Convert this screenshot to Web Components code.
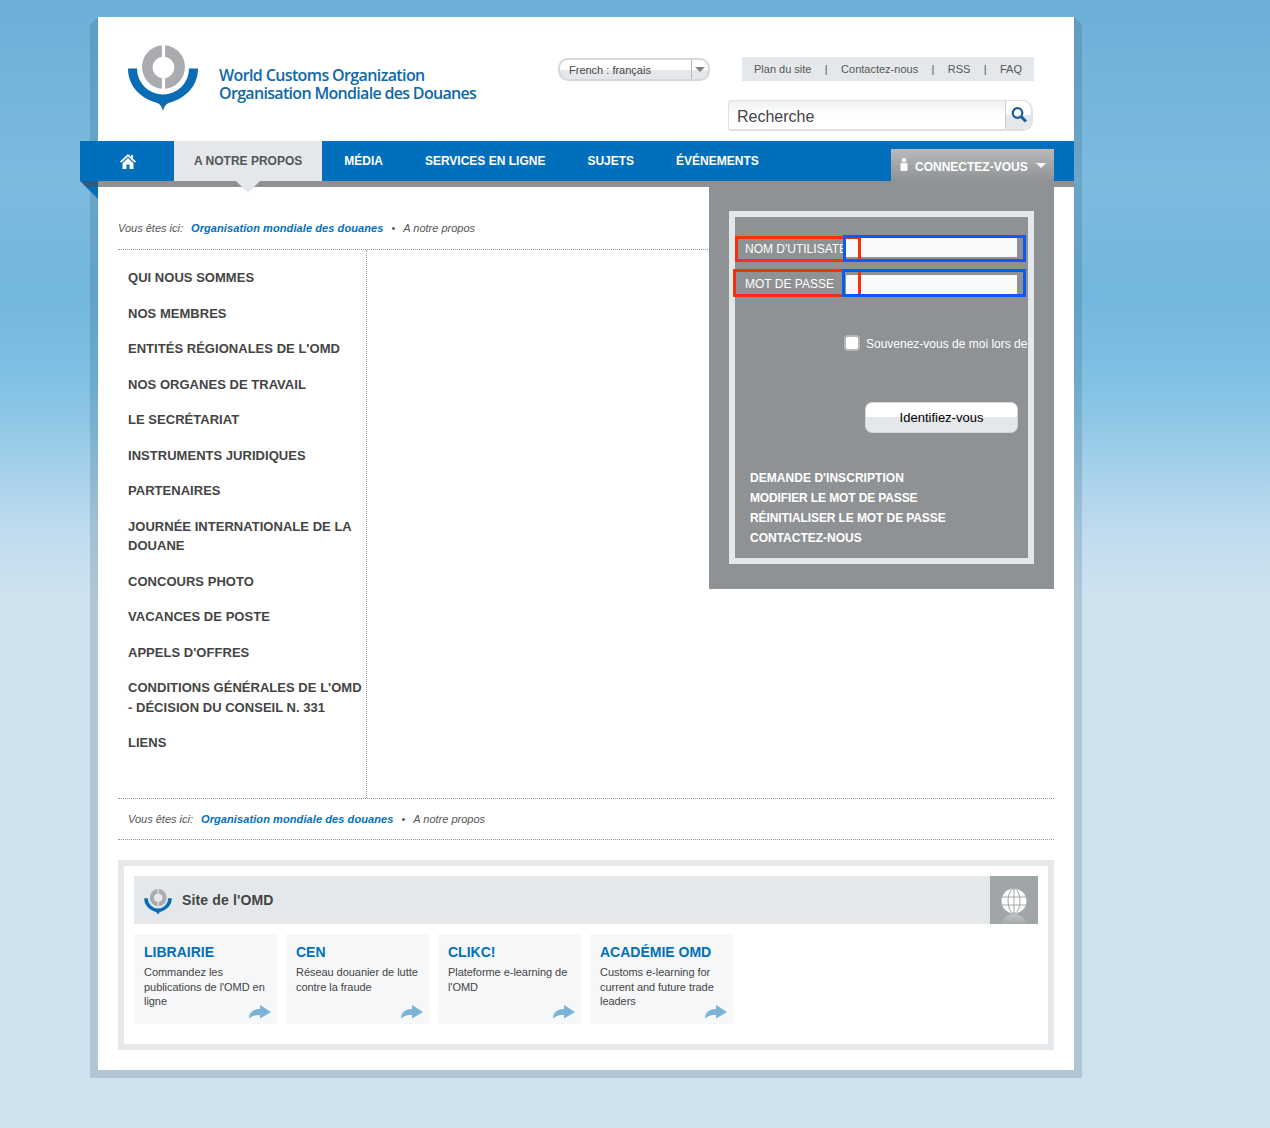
<!DOCTYPE html>
<html lang="fr">
<head>
<meta charset="UTF-8">
<title>Organisation Mondiale des Douanes</title>
<style>
    html, body { margin: 0; }
    body {
        min-height: 1128px;
        font-family: "Liberation Sans", Arial, sans-serif;
        background: linear-gradient(#6cafd7 0, #7dbbdf 180px, #72b7dc 290px, #7fc0e3 375px, #9acce8 446px, #c0dcef 532px, #d0e2ee 600px, #d0e2ee 100%);
    }
</style>
</head>
<body>
<wco-page>
    <wco-header></wco-header>
    <wco-nav></wco-nav>
    <wco-login></wco-login>
    <wco-crumbs pad="0" top="62"></wco-crumbs>
    <wco-columns><wco-sidenav></wco-sidenav></wco-columns>
    <wco-crumbs pad="10" top="41" ruled></wco-crumbs>
    <wco-sites>
        <wco-card title="LIBRAIRIE">Commandez les publications de l'OMD en ligne</wco-card>
        <wco-card title="CEN">Réseau douanier de lutte contre la fraude</wco-card>
        <wco-card title="CLIKC!">Plateforme e-learning de l'OMD</wco-card>
        <wco-card title="ACADÉMIE OMD">Customs e-learning for current and future trade leaders</wco-card>
    </wco-sites>
</wco-page>

<script>
    const LOGO = `
        <path fill="#a9abae" fill-rule="evenodd" d="M161.900 45.200A21.900 21.900 0 0 0 161.900 88.800V78.200A10.800 10.800 0 0 1 161.900 56.800ZM165.100 45.200V56.800A10.800 10.800 0 0 1 165.100 78.200V88.800A21.900 21.900 0 0 0 165.100 45.200Z"/>
        <path fill="#0a6cb4" d="M128 68.500H137A26 26 0 0 0 189 68.500H198C198 88 183 99 170 102.500C166 103.600 164 107 163 111C162 107 160 103.600 156 102.500C143 99 128 88 128 68.500Z"/>`;

    customElements.define('wco-page', class extends HTMLElement {
        connectedCallback() {
            this.attachShadow({ mode: 'open' });
            this.shadowRoot.innerHTML = `
                <style>
                    :host { display: block; position: relative; width: 976px; margin-left: 98px; padding-top: 17px; }
                    .shell { position: relative; background: #fff; height: 1053px; display: flex; flex-direction: column; }
                    .shell::before {
                        content: ''; position: absolute; inset: 0 -8px -8px -8px; z-index: -1;
                        background: rgba(20, 60, 90, .17);
                        clip-path: polygon(0 8px, 8px 0, calc(100% - 8px) 0, 100% 8px, 100% 100%, 0 100%);
                    }
                </style>
                <div class="shell"><slot></slot></div>`;
        }
    });

    customElements.define('wco-header', class extends HTMLElement {
        connectedCallback() {
            this.attachShadow({ mode: 'open' });
            this.shadowRoot.innerHTML = `
                <style>
                    :host { display: flex; height: 124px; color: #444; }
                    .logo { width: 460px; display: flex; padding: 28px 0 0 30px; box-sizing: border-box; }
                    .logo svg { width: 70px; height: 66px; }
                    .name {
                        margin: 21px 0 0 21px; font: 600 16px/18px "Open Sans", sans-serif; color: #0f68a8;
                        letter-spacing: -.62px; white-space: nowrap;
                    }
                    .name span { letter-spacing: -.68px; }
                    .lang {
                        width: 152px; height: 23px; margin-top: 41px; box-sizing: border-box;
                        border: 2px solid #d5d8da; border-radius: 10px; font-size: 11px; line-height: 20px; padding-left: 9px;
                        background: linear-gradient(#fff 50%, #e4e8eb 50%);
                        display: flex; justify-content: space-between;
                    }
                    .lang b { width: 16px; border-left: 1px solid #b5b8ba; display: flex; align-items: center; justify-content: center; }
                    .lang i { border: 5px solid transparent; border-top: 5px solid #808487; border-bottom: 0; }
                    .right { margin-left: 18px; width: 306px; display: flex; flex-direction: column; align-items: flex-end; padding-top: 40px; box-sizing: border-box; }
                    .links {
                        width: 292px; height: 24px; box-sizing: border-box; background: #e4e8eb; font-size: 11px; line-height: 24px; color: #555;
                        display: flex; justify-content: space-between; padding: 0 12px; margin-bottom: 19px;
                    }
                    .search {
                        width: 305px; height: 31px; margin-right: 1px; box-sizing: border-box; display: flex;
                        border: 1px solid #dfe2e4; border-bottom-width: 2px; border-right-width: 2px; border-radius: 3px 10px 10px 3px;
                        background: linear-gradient(#eef0f2, #fff 50%);
                        font-size: 16px; line-height: 31px; padding-left: 8px; justify-content: space-between;
                    }
                    .search b {
                        width: 25px; border-left: 1px solid #c9ccce; border-radius: 0 9px 9px 0;
                        background: linear-gradient(#fff 50%, #e4e8eb 50%);
                        display: flex; align-items: center; justify-content: center;
                    }
                </style>
                <div class="logo">
                    <svg viewBox="128 45 70 66">${LOGO}</svg>
                    <div class="name">World Customs Organization<br><span>Organisation Mondiale des Douanes</span></div>
                </div>
                <div class="lang"><span>French : français</span><b><i></i></b></div>
                <div class="right">
                    <div class="links"><span>Plan du site</span><span>|</span><span>Contactez-nous</span><span>|</span><span>RSS</span><span>|</span><span>FAQ</span></div>
                    <div class="search"><span>Recherche</span><b>
                        <svg width="18" height="18" viewBox="0 0 18 18" fill="none" stroke="#1a5f98"><circle cx="7.500" cy="7" r="4.800" stroke-width="2.200"/><path d="M11 10.500l5 5" stroke-width="3"/></svg>
                    </b></div>
                </div>`;
        }
    });

    customElements.define('wco-nav', class extends HTMLElement {
        connectedCallback() {
            const items = ['MÉDIA', 'SERVICES EN LIGNE', 'SUJETS', 'ÉVÉNEMENTS'];
            this.attachShadow({ mode: 'open' });
            this.shadowRoot.innerHTML = `
                <style>
                    :host { display: block; position: relative; margin-left: -18px; height: 46px; color: #fff; font: bold 12px/40px "Liberation Sans", sans-serif; }
                    .bar { display: flex; height: 40px; background: #016fbc; }
                    .home { width: 94px; padding-left: 2px; box-sizing: border-box; display: flex; align-items: center; justify-content: center; }
                    .on { position: relative; padding: 0 20px; background: #e4e8eb; color: #555; }
                    .on::after {
                        content: ''; position: absolute; left: 62px; top: 40px; border: 12px solid transparent;
                        border-top: 12px solid #e4e8eb; border-bottom: 0;
                    }
                    .item { padding: 0 21px; }
                    .item:nth-of-type(3) { padding: 0 20px 0 22px; }
                    .item:nth-of-type(4) { padding-left: 22px; }
                    .strip { height: 6px; margin-left: 18px; background: #8f9294; }
                    .fold { position: absolute; left: 0; top: 40px; width: 18px; height: 18px; background: linear-gradient(#2b5b82 6px, #016fbc 6px); clip-path: polygon(0 0, 100% 0, 100% 100%); }
                    .tab {
                        position: absolute; right: 20px; top: 8px; width: 163px; height: 32px; box-sizing: border-box;
                        padding-left: 24px; line-height: 37px; font-size: 12px;
                        background: linear-gradient(#b8babc, #8f9294);
                    }
                    .tab svg { position: absolute; left: 9px; top: 9px; }
                    .tab i { position: absolute; right: 8px; top: 14px; border: 5px solid transparent; border-top: 5px solid #fff; border-bottom: 0; }
                </style>
                <div class="bar">
                    <div class="home">
                        <svg width="16" height="15" viewBox="0 0 16 15" fill="#fff"><path d="M8 0L0 7.500l1.200 1.300L8 2.500l6.800 6.300L16 7.500l-3-2.800V1h-2v1.800z"/><path d="M2.500 9.200L8 4l5.500 5.200V15H9.500v-4.500h-3V15h-4z"/></svg>
                    </div>
                    <div class="on">A NOTRE PROPOS</div>
                    ${items.map(t => `<div class="item">${t}</div>`).join('')}
                </div>
                <div class="strip"></div>
                <div class="fold"></div>
                <div class="tab">
                    <svg width="8" height="13" viewBox="0 0 8 13" fill="#fff"><circle cx="4" cy="2.300" r="2.300"/><path d="M.5 5.200h7v6.800a1 1 0 0 1-1 1h-5a1 1 0 0 1-1-1z"/></svg>
                    CONNECTEZ-VOUS<i></i>
                </div>`;
        }
    });

    // dropdown that sits over the page, under the "connectez-vous" tab
    customElements.define('wco-login', class extends HTMLElement {
        connectedCallback() {
            this.attachShadow({ mode: 'open' });
            this.shadowRoot.innerHTML = `
                <style>
                    :host { display: block; position: absolute; left: 611px; top: 170px; width: 345px; height: 402px; box-sizing: border-box; padding: 24px 20px 25px; background: #8f9294; color: #fff; z-index: 2; }
                    .frame { height: 100%; box-sizing: border-box; border: 6px solid #e4e8eb; padding-top: 18px; }
                    .row { height: 28px; margin-bottom: 6px; font-size: 12px; position: relative; }
                    /* the label runs under the field's blue frame but over its fill, as on the real page */
                    .fill { position: absolute; left: 111px; top: 3px; width: 171px; height: 19px; background: #f8f9fa; }
                    label {
                        position: absolute; left: 0; top: 1px; width: 126px; height: 26px; box-sizing: border-box; padding-left: 7px;
                        border: 3px solid #f5300f; line-height: 20px; overflow: hidden; white-space: nowrap;
                    }
                    .box { position: absolute; left: 108px; top: 0; width: 183px; height: 27px; box-sizing: border-box; border: 3px solid #0a5cf0; }
                    .second .fill { top: 6px; }
                    .second label { left: -2px; top: 0; width: 128px; height: 28px; padding: 2px 0 0 9px; }
                    .second .box { left: 107px; width: 184px; height: 28px; }
                    .remember { margin: 38px 0 0 109px; height: 16px; display: flex; align-items: center; gap: 6px; font-size: 12px; overflow: hidden; white-space: nowrap; }
                    .remember i { flex: none; width: 16px; height: 16px; box-sizing: border-box; border: 2px solid #b4b6b8; border-radius: 4px; background: #fff; }
                    .remember span { padding-top: 1px; }
                    .btn {
                        margin: 51px 0 0 130px; width: 153px; height: 31px; box-sizing: border-box; border: 1px solid #d3d6d8; border-radius: 7px;
                        background: linear-gradient(#fff 50%, #e4e8eb 50%); color: #000; text-align: center; font-size: 13px; line-height: 29px;
                    }
                    .more { margin: 35px 0 0 15px; font: bold 12px/20px "Liberation Sans", sans-serif; }
                    .more div { white-space: nowrap; }
                </style>
                <div class="frame">
                    <div class="row"><i class="fill"></i><label>NOM D'UTILISATEUR</label><i class="box"></i></div>
                    <div class="row second"><i class="fill"></i><label>MOT DE PASSE</label><i class="box"></i></div>
                    <div class="remember"><i></i><span>Souvenez-vous de moi lors de ma prochaine visite</span></div>
                    <div class="btn">Identifiez-vous</div>
                    <div class="more">
                        <div style="letter-spacing:.05px">DEMANDE D'INSCRIPTION</div>
                        <div style="letter-spacing:-.125px">MODIFIER LE MOT DE PASSE</div>
                        <div style="letter-spacing:-.1px">RÉINITIALISER LE MOT DE PASSE</div>
                        <div>CONTACTEZ-NOUS</div>
                    </div>
                </div>`;
        }
    });

    customElements.define('wco-crumbs', class extends HTMLElement {
        connectedCallback() {
            const ruled = this.hasAttribute('ruled');
            this.attachShadow({ mode: 'open' });
            this.shadowRoot.innerHTML = `
                <style>
                    :host {
                        display: flex; align-items: ${ruled ? 'center' : 'flex-end'}; box-sizing: border-box; margin: 0 20px;
                        height: ${this.getAttribute('top')}px; padding-left: ${this.getAttribute('pad')}px; padding-bottom: ${ruled ? 0 : 14}px;
                        font: italic 11px/14px "Liberation Sans", sans-serif; color: #555;
                        ${ruled ? 'border-bottom: 1px dotted #999;' : ''}
                    }
                    b { color: #016fbc; margin: 0 8px; letter-spacing: .09px; }
                    i { font-style: normal; margin-right: 8px; }
                </style>
                <span>Vous êtes ici:</span><b>Organisation mondiale des douanes</b><i>•</i><span>A notre propos</span>`;
        }
    });

    customElements.define('wco-columns', class extends HTMLElement {
        connectedCallback() {
            this.attachShadow({ mode: 'open' });
            this.shadowRoot.innerHTML = `
                <style>
                    :host { display: flex; height: 550px; box-sizing: border-box; margin: 0 20px; border-top: 1px dotted #999; border-bottom: 1px dotted #999; }
                </style>
                <slot></slot>`;
        }
    });

    customElements.define('wco-sidenav', class extends HTMLElement {
        connectedCallback() {
            const items = ['QUI NOUS SOMMES', 'NOS MEMBRES', "ENTITÉS RÉGIONALES DE L'OMD", 'NOS ORGANES DE TRAVAIL', 'LE SECRÉTARIAT',
                'INSTRUMENTS JURIDIQUES', 'PARTENAIRES', 'JOURNÉE INTERNATIONALE DE LA DOUANE', 'CONCOURS PHOTO', 'VACANCES DE POSTE',
                "APPELS D'OFFRES", "CONDITIONS GÉNÉRALES DE L'OMD - DÉCISION DU CONSEIL N. 331", 'LIENS'];
            this.attachShadow({ mode: 'open' });
            this.shadowRoot.innerHTML = `
                <style>
                    :host { display: block; width: 249px; box-sizing: border-box; padding: 10px 4px 0 10px; border-right: 1px dotted #999; font: bold 13px/19.5px "Liberation Sans", sans-serif; color: #444; letter-spacing: .03px; }
                    div { padding: 8px 0; }
                </style>
                ${items.map(t => `<div>${t}</div>`).join('')}`;
        }
    });

    customElements.define('wco-sites', class extends HTMLElement {
        connectedCallback() {
            this.attachShadow({ mode: 'open' });
            this.shadowRoot.innerHTML = `
                <style>
                    :host { display: block; margin: 20px 20px 0; height: 190px; box-sizing: border-box; border: 6px solid #e4e8eb; padding: 10px; }
                    .head { height: 48px; background: #e4e8eb; display: flex; align-items: center; padding-left: 10px; font: bold 14px "Liberation Sans", sans-serif; letter-spacing: .15px; color: #444; gap: 10px; }
                    .head svg.mark { width: 28px; height: 26px; margin-top: 4px; }
                    .head span { flex: 1; }
                    .globe { width: 48px; height: 48px; background: #a0a5a7; display: block; }
                    .cards { display: flex; gap: 8px; margin-top: 10px; }
                </style>
                <div class="head">
                    <svg class="mark" viewBox="128 45 70 66">${LOGO}</svg>
                    <span>Site de l'OMD</span>
                    <svg class="globe" viewBox="0 0 48 48" fill="none" stroke="#a0a5a7">
                        <defs><linearGradient id="fade" x1="0" y1="0" x2="0" y2="1"><stop offset="0" stop-color="#fff" stop-opacity=".35"/><stop offset=".45" stop-color="#fff" stop-opacity="0"/></linearGradient></defs>
                        <circle cx="24" cy="25" r="12.500" fill="#fff" stroke="none"/>
                        <ellipse cx="24" cy="25" rx="6" ry="12.500"/><path d="M24 12v26M11 21h26M11 29h26"/>
                        <circle cx="24" cy="50.500" r="12.500" fill="url(#fade)" stroke="none"/>
                    </svg>
                </div>
                <div class="cards"><slot></slot></div>`;
        }
    });

    customElements.define('wco-card', class extends HTMLElement {
        connectedCallback() {
            this.attachShadow({ mode: 'open' });
            this.shadowRoot.innerHTML = `
                <style>
                    :host { display: block; position: relative; width: 144px; height: 90px; box-sizing: border-box; padding: 10px 10px 0; background: #f5f7f9; font: 11px/14.5px "Liberation Sans", sans-serif; color: #444; letter-spacing: -.05px; }
                    h3 { margin: 0 0 4px; font: bold 14px/17px "Liberation Sans", sans-serif; letter-spacing: 0; color: #016fbc; }
                    svg { position: absolute; right: 7px; bottom: 5px; }
                </style>
                <h3>${this.getAttribute('title')}</h3>
                <slot></slot>
                <svg width="22" height="14" viewBox="0 0 22 14" fill="#7ab3da"><path d="M22 7L11 0v4C4 4 0 8 0 13.500 3 10.500 7 10 11 10v3.500z"/></svg>`;
        }
    });
</script>
</body>
</html>
